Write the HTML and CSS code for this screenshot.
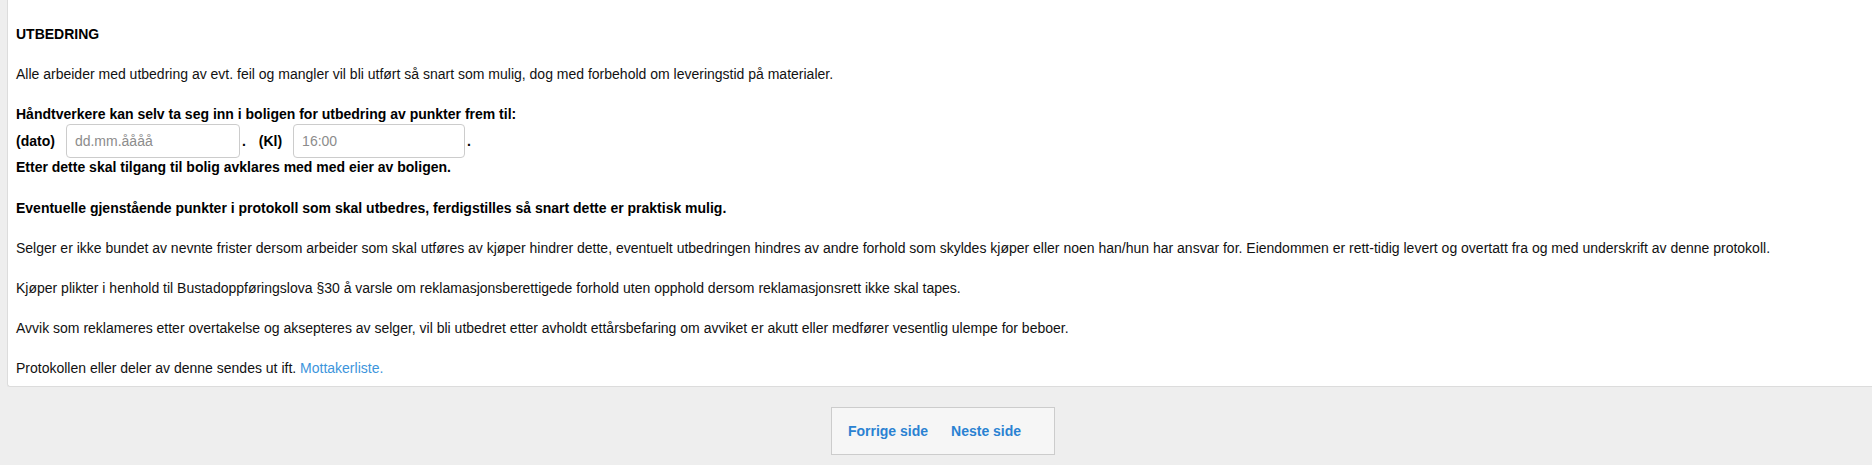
FILE: index.html
```html
<!DOCTYPE html>
<html lang="no">
<head>
<meta charset="utf-8">
<title>Utbedring</title>
<link rel="stylesheet" href="styles.css">
</head>
<body>
<div class="page">
  <section class="panel">
    <p class="b">UTBEDRING</p>
    <p class="intro">Alle arbeider med utbedring av evt. feil og mangler vil bli utført så snart som mulig, dog med forbehold om leveringstid på materialer.</p>
    <div class="block b">
      <div class="line">Håndtverkere kan selv ta seg inn i boligen for utbedring av punkter frem til:</div>
      <div class="row">
        <span class="lbl">(dato)</span>
        <input class="field" type="text" placeholder="dd.mm.åååå">
        <span class="dot">.</span>
        <span class="lbl kl">(Kl)</span>
        <input class="field f2" type="text" placeholder="16:00">
        <span class="dot">.</span>
      </div>
      <div class="line">Etter dette skal tilgang til bolig avklares med med eier av boligen.</div>
    </div>
    <p class="b">Eventuelle gjenstående punkter i protokoll som skal utbedres, ferdigstilles så snart dette er praktisk mulig.</p>
    <p>Selger er ikke bundet av nevnte frister dersom arbeider som skal utføres av kjøper hindrer dette, eventuelt utbedringen hindres av andre forhold som skyldes kjøper eller noen han/hun har ansvar for. Eiendommen er rett-tidig levert og overtatt fra og med underskrift av denne protokoll.</p>
    <p>Kjøper plikter i henhold til Bustadoppføringslova §30 å varsle om reklamasjonsberettigede forhold uten opphold dersom reklamasjonsrett ikke skal tapes.</p>
    <p>Avvik som reklameres etter overtakelse og aksepteres av selger, vil bli utbedret etter avholdt ettårsbefaring om avviket er akutt eller medfører vesentlig ulempe for beboer.</p>
    <p class="last">Protokollen eller deler av denne sendes ut ift. <a class="link" href="#">Mottakerliste.</a></p>
  </section>
  <nav class="pager-row">
    <div class="pager">
      <a href="#" class="pg">Forrige side</a>
      <a href="#" class="pg">Neste side</a>
    </div>
  </nav>
</div>
</body>
</html>
```

FILE: styles.css
```css
html, body {
  margin: 0;
  padding: 0;
  background: #eeeeee;
  overflow: hidden;
}
body {
  font-family: "Liberation Sans", Arial, sans-serif;
  font-size: 14px;
  color: #111;
}
.page {
  height: 465px;
}
.panel {
  margin-left: 7px;
  background: #fff;
  border-left: 1px solid #dcdcdc;
  border-bottom: 1px solid #dcdcdc;
  border-bottom-left-radius: 3px;
  padding: 24px 0 8px 8px;
}
.panel p {
  margin: 0 0 20px;
  line-height: 20px;
}
.panel p.intro {
  margin-bottom: 21px;
}
.panel p.last {
  margin-bottom: 0;
}
.b {
  font-weight: bold;
  color: #000;
}
.block {
  margin-bottom: 22px;
  line-height: 18px;
}
.row {
  display: flex;
  align-items: center;
  height: 35px;
}
.lbl {
  margin-right: 11px;
}
.kl {
  margin-left: 13px;
}
.field {
  box-sizing: border-box;
  width: 174px;
  height: 34px;
  border: 1px solid #cccccc;
  border-radius: 4px;
  padding: 0 8px;
  font-family: "Liberation Sans", Arial, sans-serif;
  font-size: 14px;
  color: #555;
  background: #fff;
  outline: none;
}
.field.f2 {
  width: 172px;
}
.field::placeholder {
  color: #8c8c8c;
}
.dot {
  margin-left: 2px;
}
.link {
  color: #3d95dc;
  text-decoration: none;
}
.pager-row {
  display: flex;
  justify-content: center;
  padding-left: 14px;
  padding-top: 20px;
}
.pager {
  display: flex;
  align-items: center;
  gap: 23px;
  box-sizing: border-box;
  height: 48px;
  padding: 0 33px 0 16px;
  background: #f6f6f6;
  border: 1px solid #cccccc;
}
.pg {
  color: #2a82d2;
  font-weight: bold;
  text-decoration: none;
  font-size: 14px;
}
```
